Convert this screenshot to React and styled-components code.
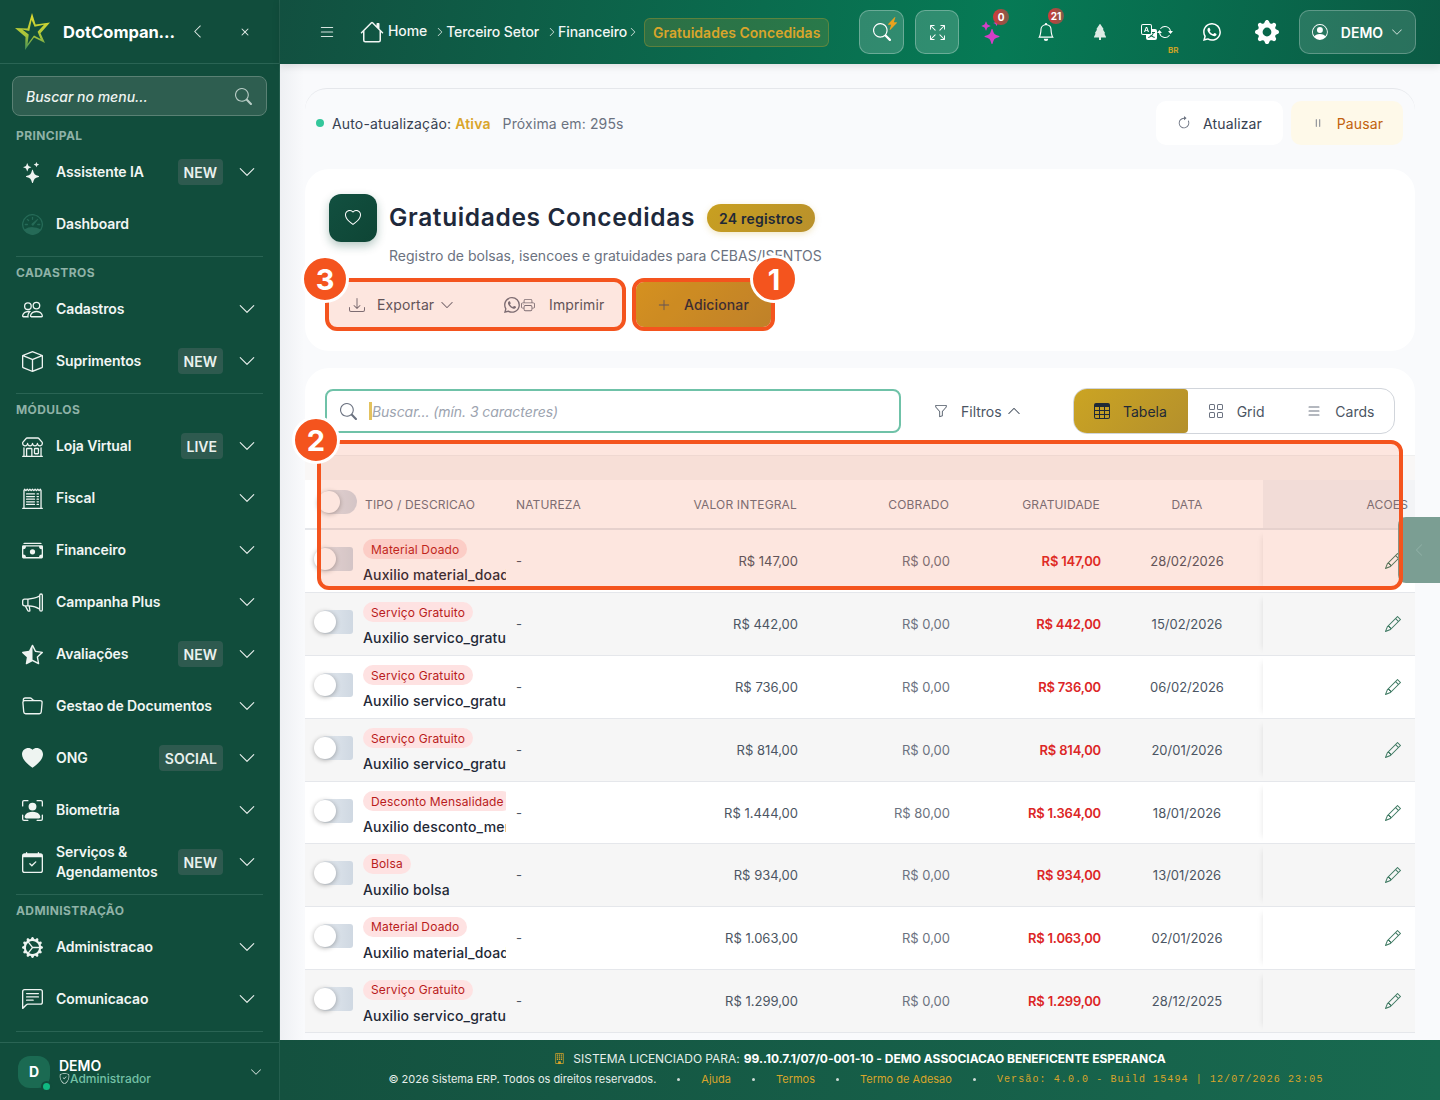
import React from 'react'
import styled, { createGlobalStyle } from 'styled-components'
import {
  BsStars, BsSpeedometer, BsPeople, BsBox, BsShop, BsReceiptCutoff, BsCashStack, BsMegaphone,
  BsStarHalf, BsFolder, BsHeartFill, BsPersonBoundingBox, BsCalendarCheck, BsGearWideConnected,
  BsChatLeftText, BsChevronDown, BsChevronUp, BsChevronLeft, BsChevronRight, BsSearch, BsX, BsList, BsHouse,
  BsLightningChargeFill, BsArrowsFullscreen, BsBell, BsTreeFill, BsTranslate, BsArrowRepeat, BsWhatsapp,
  BsGearFill, BsPersonCircle, BsArrowClockwise, BsPause, BsHeart, BsDownload, BsPrinter, BsPlusLg,
  BsFunnel, BsTable, BsGrid, BsPencil, BsBuilding, BsShieldCheck,
} from 'react-icons/bs'

const Global = createGlobalStyle`
  html, body { margin: 0; padding: 0; height: 100%; overflow: hidden; }
  body { font-family: Inter, "Liberation Sans", sans-serif; font-size: 14px; color: #1f2937; }
  * { box-sizing: border-box; }
`

const Shell = styled.div`
  position: relative;
  display: flex;
  width: 1440px;
  height: 1100px;
  overflow: hidden;
`

const Sidebar = styled.aside`
  width: 280px;
  flex: none;
  display: flex;
  flex-direction: column;
  background: #114d3c;
  border-right: 1px solid #245e4e;
  color: #f1f6f4;
`
const Brand = styled.div`
  height: 64px;
  flex: none;
  display: flex;
  align-items: center;
  padding-left: 14px;
  border-bottom: 1px solid #2a6454;
`
const BrandName = styled.div`
  width: 114px;
  margin-left: 13px;
  font-size: 16.5px;
  font-weight: 700;
  color: #fff;
  white-space: nowrap;
  overflow: hidden;
  text-overflow: ellipsis;
`
const BrandAction = styled.div`
  width: 16px;
  margin-left: ${p => p.$gap}px;
  display: flex;
  justify-content: center;
  color: #dfe9e5;
`
const MenuSearch = styled.div`
  height: 40px;
  margin: 12px 12px 0;
  padding: 0 14px 0 13px;
  display: flex;
  align-items: center;
  justify-content: space-between;
  background: #2e5e50;
  border: 1px solid #5a8174;
  border-radius: 8px;
  font-size: 14px;
  font-style: italic;
  font-weight: 500;
  color: #eef4f1;
  svg { color: #b9cdc6; }
`
const SectionLabel = styled.div`
  height: 16px;
  margin: ${p => p.$first ? '11px' : '0'} 16px 3px;
  font-size: 12px;
  line-height: 18px;
  font-weight: 700;
  letter-spacing: .4px;
  color: #8fb2a7;
`
const SideRule = styled.div`
  height: 1px;
  margin: 6px 16px 7px;
  background: #2a6454;
`
const MenuItem = styled.div`
  height: 52px;
  display: flex;
  align-items: center;
  padding: 0 23px 0 21px;
`
const MenuIcon = styled.div`
  width: 22px;
  height: 22px;
  flex: none;
  display: flex;
  align-items: center;
  justify-content: center;
  color: ${p => p.$dim ? '#256a57' : '#eef4f1'};
  font-size: 21px;
`
const MenuText = styled.div`
  flex: 1;
  margin-left: 13px;
  font-size: 14px;
  line-height: 20px;
  font-weight: 600;
  color: #f1f6f4;
  letter-spacing: -.1px;
`
const Pill = styled.div`
  height: 26px;
  margin-right: 15px;
  padding: 0 6px;
  display: flex;
  align-items: center;
  background: #2e5a4f;
  border-radius: 4px;
  font-size: 14px;
  font-weight: 600;
  color: #eaf1ee;
`
const Chevron = styled(BsChevronDown)`
  font-size: 18px;
  color: #e8efec;
`
const UserBox = styled.div`
  margin-top: auto;
  height: 58px;
  display: flex;
  align-items: center;
  padding: 0 17px 0 18px;
  border-top: 1px solid #2a6454;
`
const Avatar = styled.div`
  position: relative;
  width: 32px;
  height: 32px;
  display: flex;
  align-items: center;
  justify-content: center;
  background: #1b6a52;
  border-radius: 12px;
  font-size: 14px;
  font-weight: 700;
  color: #fff;
  &::after {
    content: '';
    position: absolute;
    right: 0;
    bottom: -2px;
    width: 7px;
    height: 7px;
    background: #10b981;
    border-radius: 50%;
    box-shadow: 0 0 0 2px #114d3c;
  }
`
const UserText = styled.div`
  flex: 1;
  margin-left: 9px;
`
const UserName = styled.div`
  font-size: 14px;
  line-height: 13px;
  font-weight: 600;
  color: #fff;
`
const UserRole = styled.div`
  display: flex;
  align-items: center;
  font-size: 12px;
  line-height: 13px;
  font-weight: 500;
  color: #73c0a5;
  svg { font-size: 11px; color: #c9dcd5; }
`

const Main = styled.div`
  flex: 1;
  display: flex;
  flex-direction: column;
  min-width: 0;
`
const Topbar = styled.header`
  height: 64px;
  flex: none;
  display: flex;
  align-items: center;
  padding: 0 24px 0 38px;
  background: linear-gradient(100deg, #125040 0%, #067a55 62%, #0b5a44 100%);
  box-shadow: 0 2px 8px rgba(0,0,0,.12);
  position: relative;
  z-index: 2;
  color: #fff;
`
const Burger = styled(BsList)`
  font-size: 18px;
  color: #d6e4df;
`
const Crumbs = styled.div`
  display: flex;
  align-items: center;
  margin: -1px 0 0 24px;
  font-size: 14px;
  font-weight: 500;
  color: #f1f6f4;
  letter-spacing: -.1px;
`
const HomeLink = styled.span`
  position: relative;
  top: -1px;
  margin-left: 4px;
`
const CrumbLink = styled.span``
const CrumbSep = styled(BsChevronRight)`
  font-size: 10px;
  margin: ${p => p.$m};
  color: #d9e6e1;
`
const CrumbNow = styled.div`
  height: 29px;
  margin: 1px 0 0 6px;
  padding: 0 8px;
  display: flex;
  align-items: center;
  background: rgba(212,165,42,.16);
  border: 1px solid rgba(212,165,42,.3);
  border-radius: 6px;
  font-weight: 600;
  color: #d9a52b;
  letter-spacing: .02px;
`
const TopActions = styled.div`
  margin-left: auto;
  display: flex;
  align-items: center;
`
const GlassButton = styled.div`
  position: relative;
  width: ${p => p.$w}px;
  height: 44px;
  margin-right: ${p => p.$mr || 0}px;
  display: flex;
  align-items: center;
  justify-content: center;
  background: rgba(255,255,255,.17);
  border: 1px solid rgba(255,255,255,.28);
  border-radius: 10px;
  font-size: ${p => p.$size || 18}px;
`
const Bolt = styled(BsLightningChargeFill)`
  position: absolute;
  top: 6px;
  right: 4px;
  font-size: 13px;
  color: #eaa21e;
`
const IconSlot = styled.div`
  position: relative;
  width: ${p => p.$w || 55}px;
  height: 44px;
  margin-right: ${p => p.$mr || 0}px;
  display: flex;
  align-items: center;
  justify-content: center;
  font-size: ${p => p.$size || 18}px;
  color: ${p => p.$color || '#fff'};
`
const Counter = styled.div`
  position: absolute;
  top: ${p => p.$top}px;
  left: ${p => p.$left}px;
  min-width: 16px;
  height: 16px;
  padding: 0 2px;
  display: flex;
  align-items: center;
  justify-content: center;
  background: linear-gradient(90deg, #d33a3a, #7c5d4b);
  border-radius: 8px;
  font-size: 10px;
  font-weight: 700;
  color: #fff;
`
const LangTag = styled.div`
  position: absolute;
  left: 39px;
  top: 35px;
  font-size: 8px;
  font-weight: 700;
  color: #c9a227;
`
const UserMenu = styled.div`
  width: 117px;
  height: 44px;
  margin-left: 5px;
  padding: 0 12px;
  display: flex;
  align-items: center;
  background: rgba(255,255,255,.13);
  border: 1px solid rgba(255,255,255,.25);
  border-radius: 10px;
  font-size: 14px;
  font-weight: 600;
  svg:first-child { font-size: 16px; }
  svg:last-child { font-size: 12px; margin-left: 8px; color: #d6e4df; }
  span { margin-left: 13px; }
`

const Content = styled.main`
  flex: 1;
  min-height: 0;
  overflow: hidden;
  padding: 24px 25px 0;
  background: linear-gradient(90deg, #eef0f3 0, #f9fafc 24px);
`
const StatusCard = styled.section`
  height: 69px;
  margin-bottom: 12px;
  padding: 0 12px 0 11px;
  display: flex;
  align-items: center;
  background: #f9fafc;
  border-top: 1px solid #e5e7eb;
  border-radius: 22px;
  letter-spacing: .15px;
`
const LiveDot = styled.span`
  width: 8px;
  height: 8px;
  margin-right: 8px;
  background: #34c79b;
  border-radius: 50%;
`
const StatusText = styled.span`
  color: ${p => p.$muted ? '#6b7280' : '#374151'};
  margin-left: ${p => p.$ml || 0}px;
  b { font-weight: 600; color: #d9a52b; }
`
const StatusButton = styled.div`
  height: 44px;
  width: ${p => p.$w}px;
  margin-left: ${p => p.$auto ? 'auto' : `${p.$ml || 0}px`};
  display: flex;
  align-items: center;
  justify-content: center;
  gap: 12px;
  background: ${p => p.$warn ? '#fef9e9' : '#fff'};
  border-radius: 10px;
  color: ${p => p.$warn ? '#c2620e' : '#374151'};
  svg { color: #6b7280; font-size: 14px; }
`
const HeadCard = styled.section`
  height: 182px;
  margin-bottom: 17px;
  padding: 25px 24px 0;
  background: #fff;
  border-radius: 24px;
`
const TitleRow = styled.div`
  display: flex;
  align-items: center;
`
const HeadIcon = styled.div`
  width: 48px;
  height: 48px;
  display: flex;
  align-items: center;
  justify-content: center;
  background: linear-gradient(135deg, #125040, #0e4535);
  border-radius: 12px;
  box-shadow: 0 4px 10px rgba(17,77,60,.3);
  font-size: 16px;
  color: #fff;
`
const Title = styled.h1`
  margin: -2px 12px 0 12px;
  font-size: 24.5px;
  font-weight: 600;
  color: #1e293b;
  letter-spacing: .64px;
`
const CountChip = styled.div`
  height: 28px;
  padding: 0 12px;
  display: flex;
  align-items: center;
  background: linear-gradient(135deg, #c9a020, #b8902c);
  border-radius: 14px;
  box-shadow: 0 2px 6px rgba(201,160,32,.25);
  font-weight: 600;
  letter-spacing: .2px;
  color: #1f2937;
`
const Subtitle = styled.div`
  margin: 4px 0 0 60px;
  font-size: 14px;
  line-height: 20px;
  color: #6b7280;
`
const ActionRow = styled.div`
  margin-top: 16px;
  display: flex;
  align-items: center;
  letter-spacing: .12px;
`
const GhostButton = styled.div`
  height: 45px;
  width: ${p => p.$w}px;
  padding-left: ${p => p.$pl}px;
  display: flex;
  align-items: center;
  color: #4b5563;
  svg { font-size: 16px; color: #6b7280; }
  span { margin: 0 6px 0 ${p => p.$gap}px; }
`
const SmallChevron = styled(BsChevronDown)`
  && { font-size: 14px; }
`
const PrintIcon = styled(BsPrinter)`
  && { margin-left: 1px; font-size: 14px; }
`
const AddButton = styled.div`
  width: 135px;
  height: 45px;
  margin-left: 24px;
  padding-left: 21px;
  display: flex;
  align-items: center;
  gap: 13px;
  background: linear-gradient(135deg, #d09c20, #b88a2c);
  border-radius: 8px;
  font-weight: 500;
  color: #1f2937;
  svg { font-size: 14px; color: #4b5563; }
`
const TableCard = styled.section`
  padding-top: 20px;
  background: #fff;
  border-radius: 24px 24px 0 0;
`
const Toolbar = styled.div`
  display: flex;
  align-items: center;
  padding: 0 20px;
  height: 46px;
`
const SearchField = styled.div`
  width: 576px;
  height: 44px;
  padding-left: 13px;
  display: flex;
  align-items: center;
  border: 2px solid #6fc2a8;
  border-radius: 8px;
  svg { font-size: 17px; color: #6b7280; }
`
const Caret = styled.span`
  width: 3px;
  height: 18px;
  margin-left: 12px;
  background: #e3c25e;
`
const Placeholder = styled.span`
  font-size: 14px;
  font-style: italic;
  letter-spacing: -.06px;
  color: #9ca3af;
`
const Filters = styled.div`
  margin-left: 33px;
  display: flex;
  align-items: center;
  color: #4b5563;
  svg:first-child { font-size: 14px; margin-right: 13px; }
  svg:last-child { font-size: 14px; margin-left: 5px; }
`
const ViewSwitch = styled.div`
  margin-left: auto;
  width: 322px;
  height: 46px;
  display: flex;
  border: 1px solid #d1d5db;
  border-radius: 14px;
`
const ViewTab = styled.div`
  width: ${p => p.$w}px;
  padding-left: ${p => p.$pl}px;
  display: flex;
  align-items: center;
  gap: 13px;
  color: ${p => p.$active ? '#1f2937' : '#4b5563'};
  background: ${p => p.$active ? 'linear-gradient(135deg, #cba423, #b4902c)' : 'transparent'};
  border-radius: ${p => p.$active ? '13px 4px 4px 13px' : '0'};
  svg { font-size: 16px; color: ${p => p.$active ? '#1f2937' : '#6b7280'}; }
`
const Band = styled.div`
  height: 25px;
  margin-top: 21px;
  background: #f9f7f6;
  border-top: 1px solid #efefef;
`
const cols = '58px 153px 132px 150px 152px 151px 162px 152px'
const HeadRow = styled.div`
  display: grid;
  grid-template-columns: ${cols};
  height: 50px;
  align-items: stretch;
  border-bottom: 2px solid #e5e7eb;
  font-size: 12px;
  letter-spacing: .15px;
  color: #6b7280;
`
const Row = styled.div`
  display: grid;
  grid-template-columns: ${cols};
  height: 62.9px;
  align-items: stretch;
  background: ${p => p.$alt ? '#f6f6f6' : '#fff'};
  border-bottom: 1px solid #e5e7eb;
  font-size: 13px;
`
const Cell = styled.div`
  display: flex;
  align-items: center;
  min-width: 0;
  justify-content: ${p => p.$align === 'right' ? 'flex-end' : p.$align === 'center' ? 'center' : 'flex-start'};
  padding-left: ${p => p.$pl || 0}px;
  padding-right: ${p => p.$pr || 0}px;
  color: ${p => p.$color || 'inherit'};
  font-weight: ${p => p.$bold ? 600 : 400};
  letter-spacing: ${p => p.$bold ? '-.2px' : 'inherit'};
`
const StickyCell = styled.div`
  display: flex;
  align-items: center;
  justify-content: flex-end;
  padding-right: ${p => p.$head ? 7 : 14}px;
  background: ${p => p.$head ? '#f3f4f6' : 'transparent'};
  box-shadow: ${p => p.$head ? 'none' : '-6px 0 6px -6px rgba(0,0,0,.1)'};
  svg { font-size: 16px; color: #3f7a63; }
`
const Switch = styled.div`
  position: relative;
  width: 38px;
  height: 24px;
  margin: -4px 0 0 ${p => p.$head ? 14 : 10}px;
  background: linear-gradient(90deg, #e7ecf1, #cfd8e2);
  border-radius: ${p => p.$head ? '12px' : '12px 3px 3px 12px'};
  &::after {
    content: '';
    position: absolute;
    left: -1px;
    top: 1px;
    width: 22px;
    height: 22px;
    background: #fff;
    border-radius: 50%;
    box-shadow: 0 1px 5px rgba(0,0,0,.32);
  }
`
const DescCell = styled.div`
  display: flex;
  flex-direction: column;
  align-items: flex-start;
  justify-content: center;
  gap: 6px;
  width: 143px;
  overflow: hidden;
  padding-top: 3px;
`
const TypeChip = styled.span`
  height: 20px;
  padding: 0 8px;
  display: flex;
  align-items: center;
  background: #fee2e2;
  border-radius: 10px;
  font-size: 12px;
  letter-spacing: .15px;
  color: #b91c1c;
  white-space: nowrap;
`
const DescText = styled.span`
  font-size: 14px;
  line-height: 20px;
  font-weight: 500;
  letter-spacing: .14px;
  color: #1f2937;
  white-space: nowrap;
`

const FooterBar = styled.footer`
  height: 60px;
  flex: none;
  display: flex;
  flex-direction: column;
  align-items: center;
  justify-content: center;
  gap: 6px;
  padding-bottom: 3px;
  background: linear-gradient(90deg, #14513f, #186a50);
  color: #e5eeea;
  position: relative;
  z-index: 2;
`
const LicenseLine = styled.div`
  display: flex;
  align-items: center;
  font-size: 12px;
  line-height: 15px;
  letter-spacing: -.03px;
  svg { font-size: 11px; color: #d9a52b; margin-right: 8px; }
  b { font-weight: 700; color: #fff; margin-left: 4px; }
`
const LinksLine = styled.div`
  display: flex;
  align-items: center;
  padding-right: 8px;
  font-size: 11px;
  line-height: 15px;
`
const LinkDot = styled.span`
  width: 3px;
  height: 3px;
  margin: 0 21px;
  background: #cfdcd7;
  border-radius: 50%;
`
const FooterLink = styled.span`
  color: #d9a52b;
`
const VersionText = styled.span`
  font-family: "Liberation Mono", monospace;
  font-size: 10px;
  letter-spacing: 1.1px;
  color: #d9a52b;
`

const SideTab = styled.div`
  position: absolute;
  right: 0;
  top: 517px;
  width: 42px;
  height: 66px;
  display: flex;
  align-items: center;
  justify-content: center;
  background: #7b9e93;
  border-radius: 8px 0 0 8px;
  color: #8fb0a6;
  font-size: 14px;
  z-index: 3;
`
const Highlight = styled.div`
  position: absolute;
  left: ${p => p.$x}px;
  top: ${p => p.$y}px;
  width: ${p => p.$w}px;
  height: ${p => p.$h}px;
  background: rgba(244,81,30,.14);
  border: 4px solid #f4541e;
  border-radius: 12px;
  z-index: 4;
`
const Marker = styled.div`
  position: absolute;
  left: ${p => p.$x - 24}px;
  top: ${p => p.$y - 24}px;
  width: 48px;
  height: 48px;
  display: flex;
  align-items: center;
  justify-content: center;
  background: #f4541e;
  border: 3px solid #fff;
  border-radius: 50%;
  font-size: 29px;
  font-weight: 700;
  color: #fff;
  z-index: 5;
`

const Logo = () => (
  <svg width="36" height="38" viewBox="0 0 36 38">
    <defs>
      <linearGradient id="logoStar" x1="0.5" y1="0" x2="0.4" y2="1">
        <stop offset="0" stopColor="#e3dc2e" />
        <stop offset="0.6" stopColor="#a8c43a" />
        <stop offset="1" stopColor="#3f8f58" />
      </linearGradient>
    </defs>
    <path
      fillRule="evenodd"
      fill="url(#logoStar)"
      d="M18 0l3.6 11.5L36 9.5l-9.5 10.8L31 30l-11-5.5L11 37l.5-13L1 15l12.5.6zM17.6 7l-2.3 11-7-1.6 6.4 5.2L13.6 31l6.4-8.6 6.6 3.6-3-7.2 6.4-7-9.4 2z"
    />
  </svg>
)

const SideEntry = ({ icon: Icon, label, pill, dim, noChevron }) => (
  <MenuItem>
    <MenuIcon $dim={dim}><Icon /></MenuIcon>
    <MenuText>{label}</MenuText>
    {pill && <Pill>{pill}</Pill>}
    {!noChevron && <Chevron />}
  </MenuItem>
)

const rows = [
  ['Material Doado', 'Auxilio material_doado', '147,00', '0,00', '147,00', '28/02/2026'],
  ['Serviço Gratuito', 'Auxilio servico_gratuito', '442,00', '0,00', '442,00', '15/02/2026'],
  ['Serviço Gratuito', 'Auxilio servico_gratuito', '736,00', '0,00', '736,00', '06/02/2026'],
  ['Serviço Gratuito', 'Auxilio servico_gratuito', '814,00', '0,00', '814,00', '20/01/2026'],
  ['Desconto Mensalidade', 'Auxilio desconto_mensalidade', '1.444,00', '80,00', '1.364,00', '18/01/2026'],
  ['Bolsa', 'Auxilio bolsa', '934,00', '0,00', '934,00', '13/01/2026'],
  ['Material Doado', 'Auxilio material_doado', '1.063,00', '0,00', '1.063,00', '02/01/2026'],
  ['Serviço Gratuito', 'Auxilio servico_gratuito', '1.299,00', '0,00', '1.299,00', '28/12/2025'],
]

export default function App() {
  return (
    <Shell>
      <Global />
      <Sidebar>
        <Brand>
          <Logo />
          <BrandName>DotCompany Sistema</BrandName>
          <BrandAction $gap={12}><BsChevronLeft size={15} /></BrandAction>
          <BrandAction $gap={32}><BsX size={18} /></BrandAction>
        </Brand>
        <MenuSearch>Buscar no menu...<BsSearch size={17} /></MenuSearch>
        <SectionLabel $first>PRINCIPAL</SectionLabel>
        <SideEntry icon={BsStars} label="Assistente IA" pill="NEW" />
        <SideEntry icon={BsSpeedometer} label="Dashboard" dim noChevron />
        <SideRule />
        <SectionLabel>CADASTROS</SectionLabel>
        <SideEntry icon={BsPeople} label="Cadastros" />
        <SideEntry icon={BsBox} label="Suprimentos" pill="NEW" />
        <SideRule />
        <SectionLabel>MÓDULOS</SectionLabel>
        <SideEntry icon={BsShop} label="Loja Virtual" pill="LIVE" />
        <SideEntry icon={BsReceiptCutoff} label="Fiscal" />
        <SideEntry icon={BsCashStack} label="Financeiro" />
        <SideEntry icon={BsMegaphone} label="Campanha Plus" />
        <SideEntry icon={BsStarHalf} label="Avaliações" pill="NEW" />
        <SideEntry icon={BsFolder} label="Gestao de Documentos" />
        <SideEntry icon={BsHeartFill} label="ONG" pill="SOCIAL" />
        <SideEntry icon={BsPersonBoundingBox} label="Biometria" />
        <SideEntry icon={BsCalendarCheck} label={<>Serviços &<br />Agendamentos</>} pill="NEW" />
        <SideRule />
        <SectionLabel>ADMINISTRAÇÃO</SectionLabel>
        <SideEntry icon={BsGearWideConnected} label="Administracao" />
        <SideEntry icon={BsChatLeftText} label="Comunicacao" />
        <SideRule />
        <UserBox>
          <Avatar>D</Avatar>
          <UserText>
            <UserName>DEMO</UserName>
            <UserRole><BsShieldCheck />Administrador</UserRole>
          </UserText>
          <BsChevronDown size={12} color="#dfe9e5" />
        </UserBox>
      </Sidebar>

      <Main>
        <Topbar>
          <Burger />
          <Crumbs>
            <BsHouse size={24} />
            <HomeLink>Home</HomeLink>
            <CrumbSep $m="0 1px 0 8px" />
            <CrumbLink>Terceiro Setor</CrumbLink>
            <CrumbSep $m="0 1px 0 8px" />
            <CrumbLink>Financeiro</CrumbLink>
            <CrumbSep $m="0 0 0 1px" />
            <CrumbNow>Gratuidades Concedidas</CrumbNow>
          </Crumbs>
          <TopActions>
            <GlassButton $w={45} $mr={11}><BsSearch /><Bolt /></GlassButton>
            <GlassButton $w={44} $mr={5} $size={15}><BsArrowsFullscreen /></GlassButton>
            <IconSlot $size={24} $color="#d43fc6"><BsStars /><Counter $top={-1} $left={29}>0</Counter></IconSlot>
            <IconSlot $w={53}><BsBell /><Counter $top={-2} $left={29}>21</Counter></IconSlot>
            <IconSlot $size={16} $color="#dcebe5" $mr={2}><BsTreeFill /></IconSlot>
            <IconSlot $size={16}><BsTranslate /><BsArrowRepeat /><LangTag>BR</LangTag></IconSlot>
            <IconSlot><BsWhatsapp /></IconSlot>
            <IconSlot $size={24}><BsGearFill /></IconSlot>
            <UserMenu><BsPersonCircle /><span>DEMO</span><BsChevronDown /></UserMenu>
          </TopActions>
        </Topbar>

        <Content>
          <StatusCard>
            <LiveDot />
            <StatusText>Auto-atualização: <b>Ativa</b></StatusText>
            <StatusText $muted $ml={12}>Próxima em: 295s</StatusText>
            <StatusButton $w={127} $auto><BsArrowClockwise />Atualizar</StatusButton>
            <StatusButton $w={112} $ml={8} $warn><BsPause />Pausar</StatusButton>
          </StatusCard>

          <HeadCard>
            <TitleRow>
              <HeadIcon><BsHeart /></HeadIcon>
              <Title>Gratuidades Concedidas</Title>
              <CountChip>24 registros</CountChip>
            </TitleRow>
            <Subtitle>Registro de bolsas, isencoes e gratuidades para CEBAS/ISENTOS</Subtitle>
            <ActionRow>
              <GhostButton $w={155} $pl={20} $gap={12}><BsDownload /><span>Exportar</span><SmallChevron /></GhostButton>
              <GhostButton $w={128} $pl={20} $gap={14}>
                <BsWhatsapp /><PrintIcon /><span>Imprimir</span>
              </GhostButton>
              <AddButton><BsPlusLg />Adicionar</AddButton>
            </ActionRow>
          </HeadCard>

          <TableCard>
            <Toolbar>
              <SearchField>
                <BsSearch />
                <Caret />
                <Placeholder>Buscar... (mín. 3 caracteres)</Placeholder>
              </SearchField>
              <Filters><BsFunnel />Filtros<BsChevronUp /></Filters>
              <ViewSwitch>
                <ViewTab $w={114} $pl={20} $active><BsTable />Tabela</ViewTab>
                <ViewTab $w={119} $pl={20}><BsGrid />Grid</ViewTab>
                <ViewTab $w={88} $pl={0}><BsList />Cards</ViewTab>
              </ViewSwitch>
            </Toolbar>
            <Band />
            <HeadRow>
              <Cell><Switch $head /></Cell>
              <Cell $pl={2}>TIPO / DESCRICAO</Cell>
              <Cell>NATUREZA</Cell>
              <Cell $align="right" $pr={1}>VALOR INTEGRAL</Cell>
              <Cell $align="right" $pr={1}>COBRADO</Cell>
              <Cell $align="right" $pr={1}>GRATUIDADE</Cell>
              <Cell $align="center" $pl={10}>DATA</Cell>
              <StickyCell $head>ACOES</StickyCell>
            </HeadRow>
            {rows.map((r, i) => (
              <Row key={i} $alt={i % 2 === 1}>
                <Cell><Switch /></Cell>
                <Cell>
                  <DescCell>
                    <TypeChip>{r[0]}</TypeChip>
                    <DescText>{r[1]}</DescText>
                  </DescCell>
                </Cell>
                <Cell $color="#4b5563">-</Cell>
                <Cell $align="right" $color="#4b5563">R$ {r[2]}</Cell>
                <Cell $align="right" $color="#6b7280">R$ {r[3]}</Cell>
                <Cell $align="right" $color="#dc2626" $bold>R$ {r[4]}</Cell>
                <Cell $align="center" $pl={10} $color="#4b5563">{r[5]}</Cell>
                <StickyCell><BsPencil /></StickyCell>
              </Row>
            ))}
          </TableCard>
        </Content>

        <FooterBar>
          <LicenseLine>
            <BsBuilding />SISTEMA LICENCIADO PARA:<b>99..10.7.1/07/0-001-10 - DEMO ASSOCIACAO BENEFICENTE ESPERANCA</b>
          </LicenseLine>
          <LinksLine>
            © 2026 Sistema ERP. Todos os direitos reservados.
            <LinkDot />
            <FooterLink>Ajuda</FooterLink>
            <LinkDot />
            <FooterLink>Termos</FooterLink>
            <LinkDot />
            <FooterLink>Termo de Adesao</FooterLink>
            <LinkDot />
            <VersionText>Versão: 4.0.0 - Build 15494 | 12/07/2026 23:05</VersionText>
          </LinksLine>
        </FooterBar>
      </Main>

      <SideTab><BsChevronLeft /></SideTab>
      <Highlight $x={632} $y={278} $w={143} $h={53} />
      <Highlight $x={325} $y={278} $w={301} $h={53} />
      <Highlight $x={317} $y={440} $w={1086} $h={150} />
      <Marker $x={774} $y={279}>1</Marker>
      <Marker $x={316} $y={440}>2</Marker>
      <Marker $x={325} $y={279}>3</Marker>
    </Shell>
  )
}
